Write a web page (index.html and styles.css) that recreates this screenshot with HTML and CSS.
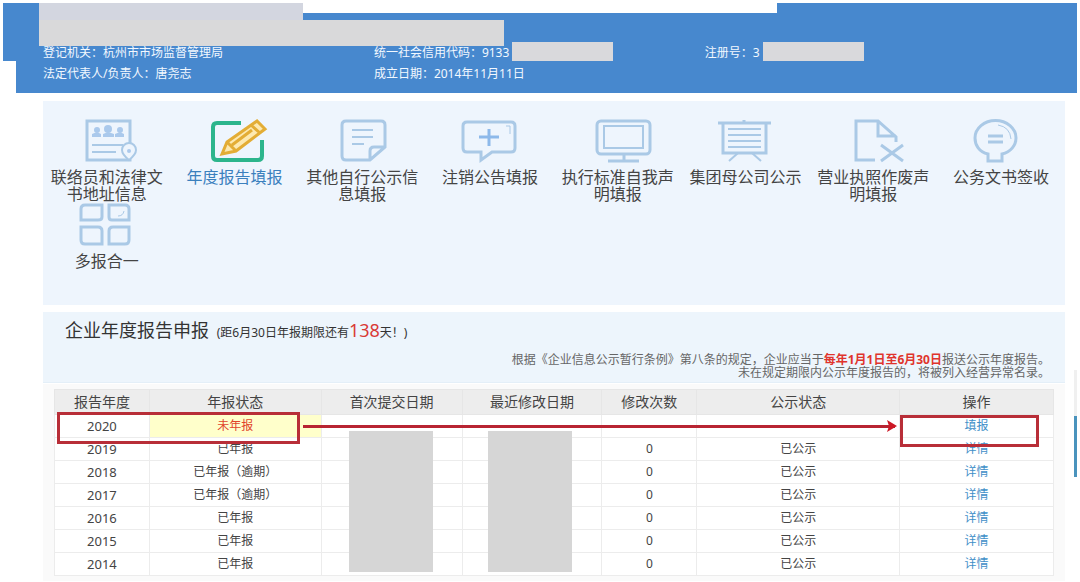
FILE: index.html
```html
<!DOCTYPE html>
<html lang="zh-CN">
<head>
<meta charset="utf-8">
<title>企业年度报告申报</title>
<link rel="stylesheet" href="styles.css">
</head>
<body>
<header class="banner">
  <div class="banner-shape">
    <dl class="info">
      <div class="field"><dt>登记机关：</dt><dd>杭州市市场监督管理局</dd></div>
      <div class="field"><dt>统一社会信用代码：</dt><dd>9133<span class="mask"></span></dd></div>
      <div class="field"><dt>注册号：</dt><dd>3<span class="mask"></span></dd></div>
      <div class="field"><dt>法定代表人/负责人：</dt><dd>唐尧志</dd></div>
      <div class="field"><dt>成立日期：</dt><dd>2014年11月11日</dd></div>
    </dl>
  </div>
  <span class="name-mask name-mask-top"></span>
  <span class="name-mask name-mask-main"></span>
</header>

<main class="content">
  <nav class="services">
    <a class="service" href="#">
      <svg class="icon" viewBox="0 0 64 44"><rect x="12" y="2" width="43" height="39"/><g class="solid"><circle cx="22" cy="11" r="3"/><circle cx="33" cy="10" r="4"/><circle cx="45" cy="11" r="3"/><path d="M17 18v-3q5-3 9 0v3zM28 18v-3q5-3 11 0v3zM40 18v-3q5-3 9 0v3z"/></g><path class="thin" d="M17 26h31M17 33h24"/><path class="plate" d="M54 41c-5-4-7-7-7-10a7 7 0 0 1 14 0c0 3-2 6-7 10z"/><circle class="solid" cx="54" cy="32" r="2"/></svg>
      <span>联络员和法律文书地址信息</span>
    </a>
    <a class="service active" href="#">
      <svg class="icon" viewBox="0 0 64 44"><path class="green" d="M38 4H14q-4 0-4 4v29q0 4 4 4h41q4 0 4-4V21"/><path class="pencil" d="M19 35l5-12L54 2l8 8-29 22zM24 23l9 9M48 6l9 8M29 26l20-15"/></svg>
      <span>年度报告填报</span>
    </a>
    <a class="service" href="#">
      <svg class="icon" viewBox="0 0 64 44"><path d="M55 28V6q0-4-4-4H16q-4 0-4 4v31q0 4 4 4h24zM40 41v-9q0-4 4-4h11"/><path class="thin" d="M22 11h21M22 18h21M22 25h12"/></svg>
      <span>其他自行公示信息填报</span>
    </a>
    <a class="service" href="#">
      <svg class="icon" viewBox="0 0 64 44"><path d="M9 3h44q4 0 4 4v22q0 4-4 4H34L23 41V33H9q-4 0-4-4V7q0-4 4-4z"/><path class="fine" d="M48 7h4v8"/><path class="plus" d="M21 18h20M31 10v17"/></svg>
      <span>注销公告填报</span>
    </a>
    <a class="service" href="#">
      <svg class="icon" viewBox="0 0 64 44"><rect x="11" y="2" width="53" height="33" rx="4"/><rect class="thin" x="18" y="7" width="39" height="22"/><path d="M38 35v6M22 42h31"/></svg>
      <span>执行标准自我声明填报</span>
    </a>
    <a class="service" href="#">
      <svg class="icon" viewBox="0 0 64 44"><path d="M4 4h53M30 1v3M9 4v30h43V4"/><path class="thin" d="M14 10h33M14 16h33M14 22h33M14 28h33M24 34l-9 8M38 34l9 8"/></svg>
      <span>集团母公司公示</span>
    </a>
    <a class="service" href="#">
      <svg class="icon" viewBox="0 0 64 44"><path d="M34 41H15V2h22l18 16v5M37 2v15h18M40 26l22 16M62 26L40 42"/></svg>
      <span>营业执照作废声明填报</span>
    </a>
    <a class="service" href="#">
      <svg class="icon" viewBox="0 0 64 44"><path d="M19 42v-7C10 33 6 26 6 19a20 17 0 0 1 41 0c0 7-5 14-14 16v7zM19 17h15M19 23h15"/><path class="fine" d="M29 6q12 2 13 14"/></svg>
      <span>公务文书签收</span>
    </a>
    <a class="service" href="#">
      <svg class="icon" viewBox="0 0 64 44"><path d="M10 2h17v12q0 3-4 3H6V6q0-4 4-4zM34 2h16q4 0 4 4v11H37q-3 0-3-3zM6 24h17q4 0 4 4v13H10q-4 0-4-4zM38 24h16v13q0 4-4 4H34V28q0-4 4-4z"/><path class="fine" d="M43 13q5 0 6-5"/></svg>
      <span>多报合一</span>
    </a>
  </nav>

  <section class="report">
    <div class="report-head">
      <h1 class="title">企业年度报告申报 <small>(距6月30日年报期限还有<b>138</b>天！)</small></h1>
      <p class="notice">根据《企业信息公示暂行条例》第八条的规定，企业应当于<strong>每年1月1日至6月30日</strong>报送公示年度报告。<br>未在规定期限内公示年度报告的，将被列入经营异常名录。</p>
    </div>
    <div class="table-area">
      <table class="reports">
        <colgroup><col class="c-year"><col class="c-state"><col class="c-first"><col class="c-last"><col class="c-count"><col class="c-public"><col class="c-action"></colgroup>
        <thead><tr><th>报告年度</th><th>年报状态</th><th>首次提交日期</th><th>最近修改日期</th><th>修改次数</th><th>公示状态</th><th>操作</th></tr></thead>
        <tbody>
          <tr><td>2020</td><td class="pending">未年报</td><td></td><td></td><td></td><td></td><td><a href="#">填报</a></td></tr>
          <tr><td>2019</td><td>已年报</td><td></td><td></td><td>0</td><td>已公示</td><td><a href="#">详情</a></td></tr>
          <tr><td>2018</td><td>已年报（逾期）</td><td></td><td></td><td>0</td><td>已公示</td><td><a href="#">详情</a></td></tr>
          <tr><td>2017</td><td>已年报（逾期）</td><td></td><td></td><td>0</td><td>已公示</td><td><a href="#">详情</a></td></tr>
          <tr><td>2016</td><td>已年报</td><td></td><td></td><td>0</td><td>已公示</td><td><a href="#">详情</a></td></tr>
          <tr><td>2015</td><td>已年报</td><td></td><td></td><td>0</td><td>已公示</td><td><a href="#">详情</a></td></tr>
          <tr><td>2014</td><td>已年报</td><td></td><td></td><td>0</td><td>已公示</td><td><a href="#">详情</a></td></tr>
        </tbody>
      </table>
      <span class="date-mask date-mask-first"></span>
      <span class="date-mask date-mask-last"></span>
      <span class="mark mark-year"></span>
      <span class="mark mark-action"></span>
      <span class="arrow"><svg viewBox="0 0 12 14"><path d="M1 1l10 6-10 6 2-6z"/></svg></span>
    </div>
  </section>
</main>
<span class="side-bar"></span>
</body>
</html>
```
FILE: styles.css
```css
* { box-sizing: border-box; }

body {
  margin: 0;
  padding: 3px 3px 0;
  position: relative;
  background: #fff;
  color: #444;
  font: 12px/21px "Noto Sans", "Noto Sans CJK SC", sans-serif;
}

a { color: #3f8fc8; text-decoration: none; }

/* Banner */
.banner { position: relative; }

.banner-shape {
  padding: 39px 0 9px 40px;
  background: #4788ce;
  color: #f2f8ff;
  clip-path: polygon(0 0, 300px 0, 300px 10px, 774px 10px, 774px 0, 100% 0, 100% 100%, 13px 100%, 13px 58px, 0 58px);
}

.info {
  margin: 0;
  display: grid;
  grid-template-columns: repeat(3, 32%);
}

.field { display: flex; white-space: nowrap; }

.field dd { margin: 0; display: flex; }

.mask { width: 101px; height: 19px; margin-left: 3px; background: #d9d9dc; }

.name-mask { position: absolute; left: 36px; }

.name-mask-top { top: 0; width: 264px; height: 18px; background: #d3d6e0; }

.name-mask-main { top: 17px; width: 465px; height: 26px; background: #d9d9da; }

/* Service links */
.content { margin: 8px 12px 0 40px; }

.services {
  min-height: 204px;
  padding-top: 18px;
  display: grid;
  grid-template-columns: repeat(8, 1fr);
  align-content: start;
  background: #eef5fd;
}

.service {
  padding: 0 6px;
  display: flex;
  flex-direction: column;
  align-items: center;
  gap: 6px;
  color: #444;
  font-size: 16px;
  line-height: 17px;
  text-align: center;
}

.service.active { color: #3b80bd; }

.icon {
  width: 64px;
  height: 44px;
  overflow: visible;
  fill: none;
  stroke: #aac9e6;
  stroke-width: 3;
}

.icon .solid { fill: #aac9ec; stroke: none; }
.icon .plate { fill: #eef5fd; stroke-width: 2; }
.icon .plus { stroke: #8db9ea; }
.icon .thin { stroke-width: 2; }
.icon .fine { stroke-width: 1; }
.icon .green { stroke: #2cb58c; stroke-width: 4; }
.icon .pencil { fill: #fde9b0; stroke: #e3ad35; }

/* Annual report */
.report { margin-top: 7px; background: #fafafa; }

.report-head { padding: 8px 15px 3px 22px; background: #edf5fc; border-bottom: 1px solid #e4eff8; }

.title { margin: 0; color: #333; font-size: 18px; font-weight: 400; line-height: 21px; }

.title small { margin-left: 3px; font-size: 12px; }

.title b { color: #d93a36; font-size: 18px; font-weight: 400; }

.notice { margin: 10px 0 0; color: #666; line-height: 13px; text-align: right; }

.notice strong { color: #e0342c; }

.table-area { position: relative; padding: 5px 11px 5px; border-top: 1px solid #fff; }

.reports { width: 100%; border-collapse: collapse; table-layout: fixed; background: #fff; }

.c-year, .c-count { width: 9.5%; }
.c-state { width: 17.2%; }
.c-first { width: 14.1%; }
.c-last { width: 14%; }
.c-public { width: 20.3%; }

.reports th, .reports td {
  height: 23px;
  padding: 0;
  border: 1px solid #ececec;
  text-align: center;
  line-height: 20px;
}

.reports th { height: 25px; background: #ededed; border-color: #e6e6e6; font-size: 14px; font-weight: 400; }

.reports td:first-child { font-size: 13px; }

.reports .pending { background: #ffffcb; color: #e0442a; }

/* Overlays on the table */
.date-mask { position: absolute; top: 47px; width: 84px; height: 141px; background: #d6d6d6; }

.date-mask-first { left: 29.9%; }

.date-mask-last { left: 43.5%; }

.mark { position: absolute; border: 3px solid #b82e38; }

.mark-year { left: 14px; top: 28px; width: 23.8%; height: 32px; }

.mark-action { left: 83.9%; top: 31px; width: 13.6%; height: 32px; }

.arrow {
  position: absolute;
  left: 25.4%;
  right: 16.3%;
  top: 35px;
  height: 14px;
  display: flex;
  align-items: center;
}

.arrow::before { content: ""; flex: 1; height: 3px; background: #b82432; }

.arrow svg { width: 12px; height: 14px; margin-left: -9px; fill: #cc1826; }

.side-bar {
  position: absolute;
  right: 3px;
  top: 370px;
  width: 3px;
  height: 107px;
  background: linear-gradient(#f0f0f0 46px, #4a93bd 46px);
}
```
